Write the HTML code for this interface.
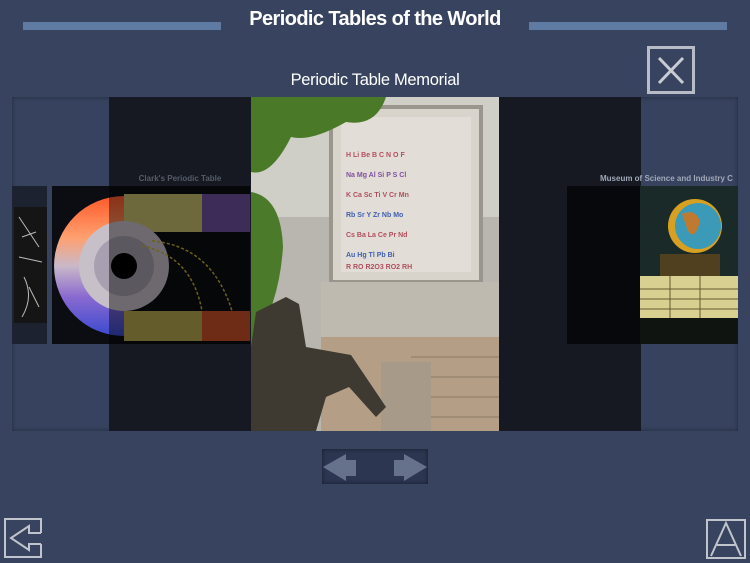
<!DOCTYPE html>
<html><head><meta charset="utf-8"><style>
html,body{margin:0;padding:0}
body{width:750px;height:563px;background:#38445f;position:relative;overflow:hidden;font-family:"Liberation Sans",sans-serif}
.abs{position:absolute}
</style></head><body>
<div class="abs" style="left:23px;top:22px;width:198px;height:8px;background:#5f7ba3"></div>
<div class="abs" style="left:529px;top:22px;width:198px;height:8px;background:#5f7ba3"></div>
<div class="abs" style="left:221px;top:8px;width:308px;text-align:center;color:#fff;font-weight:bold;font-size:20px;letter-spacing:-0.6px">Periodic Tables of the World</div>
<div class="abs" style="left:200px;top:71px;width:350px;text-align:center;color:#fff;font-size:16.5px;letter-spacing:-0.3px">Periodic Table Memorial</div>
<div class="abs" style="left:647px;top:46px;width:48px;height:48px;border:3px solid #b8bcc6;box-sizing:border-box"></div>
<svg class="abs" style="left:647px;top:46px" width="48" height="48"><path d="M12 12 L36 37 M36 12 L12 37" stroke="#c8ccd4" stroke-width="3"/></svg>

<div class="abs" style="left:12px;top:97px;width:726px;height:334px;background:#36425e;box-shadow:inset 0 0 4px rgba(0,0,0,.4)"></div>
<div class="abs" style="left:109px;top:97px;width:532px;height:334px;background:#161922"></div>
<div class="abs" style="left:12px;top:186px;width:35px;height:158px;background:#1c2230"></div>
<div class="abs" style="left:14px;top:207px;width:33px;height:116px;background:#151515"></div>
<svg class="abs" style="left:14px;top:207px" width="33" height="116"><path d="M5 10 L25 40 M8 30 L22 25 M5 50 L28 55 M10 70 Q20 90 8 110 M15 80 L25 100" stroke="#bbb" stroke-width="1" fill="none"/></svg>
<div class="abs" style="left:52px;top:186px;width:198px;height:158px;background:#0c0d12"></div>
<svg class="abs" style="left:52px;top:186px" width="198" height="158">
<defs><linearGradient id="g1" x1="0" y1="0" x2="0" y2="1"><stop offset="0" stop-color="#ff5a2a"/><stop offset=".3" stop-color="#ffa070"/><stop offset=".5" stop-color="#c9b8c8"/><stop offset=".72" stop-color="#8a6ad0"/><stop offset="1" stop-color="#3a4ad0"/></linearGradient></defs>
<rect x="72" y="8" width="126" height="38" fill="#c8c070"/>
<rect x="72" y="125" width="126" height="30" fill="#b8a850"/>
<rect x="150" y="125" width="48" height="30" fill="#c8502a"/>
<rect x="150" y="8" width="48" height="38" fill="#7050a0"/>
<path d="M72 10 A70 70 0 0 0 72 150 L72 10Z" fill="url(#g1)"/>
<circle cx="72" cy="80" r="45" fill="#c8c0c8"/>
<circle cx="72" cy="80" r="30" fill="#a8a0b0"/>
<path d="M90 60 Q140 70 150 125 M100 55 Q160 60 180 125" stroke="#c8b030" stroke-width="1.5" fill="none" stroke-dasharray="3 2"/>
<circle cx="72" cy="80" r="13" fill="#000"/>
<rect x="57" y="0" width="141" height="158" fill="#000" opacity=".45"/>
</svg>
<div class="abs" style="left:105px;top:174px;width:150px;text-align:center;color:#555c68;font-size:8px;font-weight:bold">Clark's Periodic Table</div>
<div class="abs" style="left:567px;top:186px;width:73px;height:158px;background:#06080c"></div>
<div class="abs" style="left:640px;top:186px;width:98px;height:158px;background:#1a2a28"></div>
<svg class="abs" style="left:640px;top:186px" width="98" height="158">
<circle cx="55" cy="40" r="27" fill="#d8a020"/><circle cx="58" cy="40" r="23" fill="#3a9ab8"/>
<path d="M42 28 Q55 22 60 35 Q55 55 48 45Z" fill="#c07a30"/>
<rect x="20" y="68" width="60" height="22" fill="#504020"/>
<rect x="0" y="90" width="98" height="42" fill="#d8d090"/>
<g stroke="#605a30" stroke-width="1"><path d="M0 103H98M0 113H98M0 123H98M30 90V132M60 90V132"/></g>
<rect x="0" y="132" width="98" height="26" fill="#101410"/>
</svg>
<div class="abs" style="left:600px;top:174px;width:150px;color:#a0a8b8;font-size:8px;font-weight:bold;white-space:nowrap">Museum of Science and Industry C</div>
<svg class="abs" style="left:251px;top:97px" width="248" height="334">
<rect width="248" height="334" fill="#b8b6ae"/>
<rect x="0" y="0" width="248" height="120" fill="#cfcfc8"/>
<rect x="80" y="10" width="150" height="175" fill="#d8d4cc" stroke="#9a968e" stroke-width="4"/>
<rect x="90" y="20" width="130" height="155" fill="#e2ddd6"/>
<g font-size="7" font-weight="bold" fill="#b05060">
<text x="95" y="60">H Li Be B C N O F</text><text x="95" y="80" fill="#8050a0">Na Mg Al Si P S Cl</text>
<text x="95" y="100">K Ca Sc Ti V Cr Mn</text><text x="95" y="120" fill="#4060b0">Rb Sr Y Zr Nb Mo</text>
<text x="95" y="140">Cs Ba La Ce Pr Nd</text><text x="95" y="160" fill="#4060b0">Au Hg Tl Pb Bi</text>
<text x="95" y="172">R RO R2O3 RO2 RH</text></g>
<rect x="70" y="185" width="178" height="60" fill="#bfbab0"/>
<rect x="70" y="240" width="178" height="94" fill="#b49e86"/>
<g stroke="#8a7a68" stroke-width="1"><path d="M160 260H248M160 280H248M160 300H248M160 320H248"/></g>
<rect x="130" y="265" width="50" height="69" fill="#a89a88"/>
<path d="M0 0H135Q125 30 95 25Q60 45 40 40Q20 80 0 75Z" fill="#4a7a28"/>
<path d="M0 95Q30 100 32 150Q28 210 0 250Z" fill="#4a7a2a"/>
<path d="M5 215L35 200L48 207L55 250L100 258L135 310L125 320L98 290L75 300L65 334H0V250Z" fill="#3e3a32"/>
</svg>
<div class="abs" style="left:322px;top:449px;width:106px;height:35px;background:#2c3650;box-shadow:inset 0 0 4px rgba(0,0,0,.5)"></div>
<svg class="abs" style="left:322px;top:449px" width="106" height="35"><path d="M1 18L24 5V11H34V27H24V32Z" fill="#66728c"/><path d="M105 18L82 5V11H72V27H82V32Z" fill="#66728c"/></svg>
<svg class="abs" style="left:0;top:513px" width="50" height="50" fill="none" stroke="#c0c4cc" stroke-width="2">
<path d="M41 20V6H5V44H41V31"/>
<path d="M41 20H29V13L11 25L29 37V31H41"/>
</svg>
<svg class="abs" style="left:700px;top:515px" width="50" height="48"><path d="M7 5H45V43H7Z" fill="none" stroke="#c0c4cc" stroke-width="2"/><path d="M11 41L26 8L41 41M17 30H35" fill="none" stroke="#c0c4cc" stroke-width="2"/></svg>
</body></html>
